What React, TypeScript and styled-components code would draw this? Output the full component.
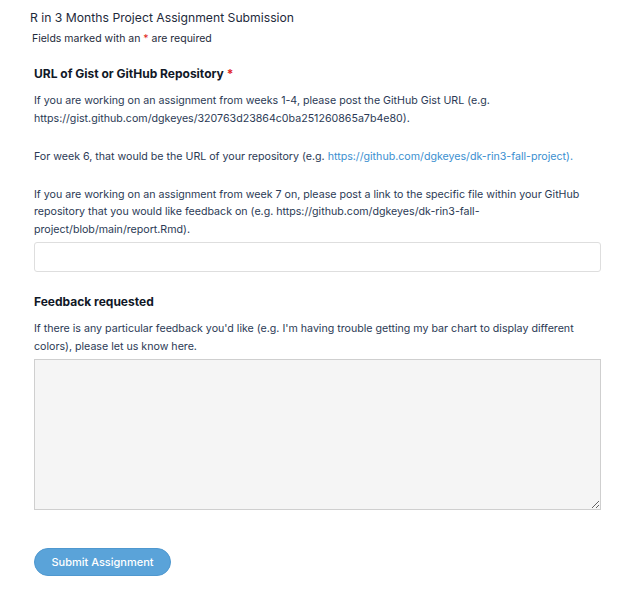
import React from "react";
import styled, { createGlobalStyle } from "styled-components";

const Global = createGlobalStyle`
  html, body { margin: 0; padding: 0; background: #fff; }
  body { font-family: Inter, "Noto Sans", sans-serif; color: #1e2a3b; }
  * { box-sizing: border-box; }
`;

const Page = styled.div`
  padding: 9px 30px 20px 30px;
  width: 635px;
`;

const Title = styled.h1`
  margin: 0;
  font-size: 12.2px;
  font-weight: 400;
  line-height: 18px;
  color: #1e2a3b;
`;

const Note = styled.p`
  margin: 4px 0 0 2px;
  font-size: 10.5px;
  line-height: 16px;
  color: #1e2a3b;
`;

const Star = styled.span`
  color: #e02424;
`;

const Form = styled.form`
  display: flex;
  flex-direction: column;
  padding: 18px 4px 0 4px;
`;

const Field = styled.div<{ $gap: number }>`
  display: flex;
  flex-direction: column;
  margin-bottom: ${(p) => p.$gap}px;
`;

const Label = styled.label`
  font-size: 12px;
  font-weight: 700;
  line-height: 18px;
  color: #111827;
  margin-bottom: 9px;
`;

const Help = styled.p`
  margin: 0 0 20.5px 0;
  font-family: Inter, sans-serif;
  font-size: 10.65px;
  line-height: 17.5px;
  color: #2b3a55;
  &:last-of-type { margin-bottom: 4px; }
`;

const Link = styled.a`
  color: #3b8fd0;
  text-decoration: none;
`;

const Input = styled.input`
  width: 567px;
  height: 30px;
  border: 1px solid #dedede;
  border-radius: 3px;
  background: #fff;
  font: inherit;
  outline: none;
`;

const TextArea = styled.textarea`
  width: 567px;
  height: 151px;
  border: 1px solid #cfcfcf;
  border-radius: 0;
  background: #f5f5f5;
  font: inherit;
  outline: none;
`;

const Button = styled.button`
  align-self: flex-start;
  width: 137px;
  height: 28px;
  border: 1px solid #4f98cf;
  border-radius: 15px;
  background: #5aa3d9;
  color: #fff;
  font-family: Inter, sans-serif;
  font-size: 11px;
  font-weight: 500;
  cursor: pointer;
`;

export default function App() {
  return (
    <Page>
      <Global />
      <Title>R in 3 Months Project Assignment Submission</Title>
      <Note>
        Fields marked with an <Star>*</Star> are required
      </Note>
      <Form onSubmit={(e) => e.preventDefault()}>
        <Field $gap={21}>
          <Label>
            URL of Gist or GitHub Repository <Star>*</Star>
          </Label>
          <Help>
            If you are working on an assignment from weeks 1-4, please post the GitHub Gist URL (e.g.
            <br />
            https://gist.github.com/dgkeyes/320763d23864c0ba251260865a7b4e80).
          </Help>
          <Help>
            For week 6, that would be the URL of your repository (e.g.{" "}
            <Link href="#">https://github.com/dgkeyes/dk-rin3-fall-project).</Link>
          </Help>
          <Help>
            If you are working on an assignment from week 7 on, please post a link to the specific file within your GitHub
            <br />
            repository that you would like feedback on (e.g. https://github.com/dgkeyes/dk-rin3-fall-
            <br />
            project/blob/main/report.Rmd).
          </Help>
          <Input type="text" />
        </Field>
        <Field $gap={38}>
          <Label>Feedback requested</Label>
          <Help>
            If there is any particular feedback you'd like (e.g. I'm having trouble getting my bar chart to display different
            <br />
            colors), please let us know here.
          </Help>
          <TextArea />
        </Field>
        <Button type="submit">Submit Assignment</Button>
      </Form>
    </Page>
  );
}
